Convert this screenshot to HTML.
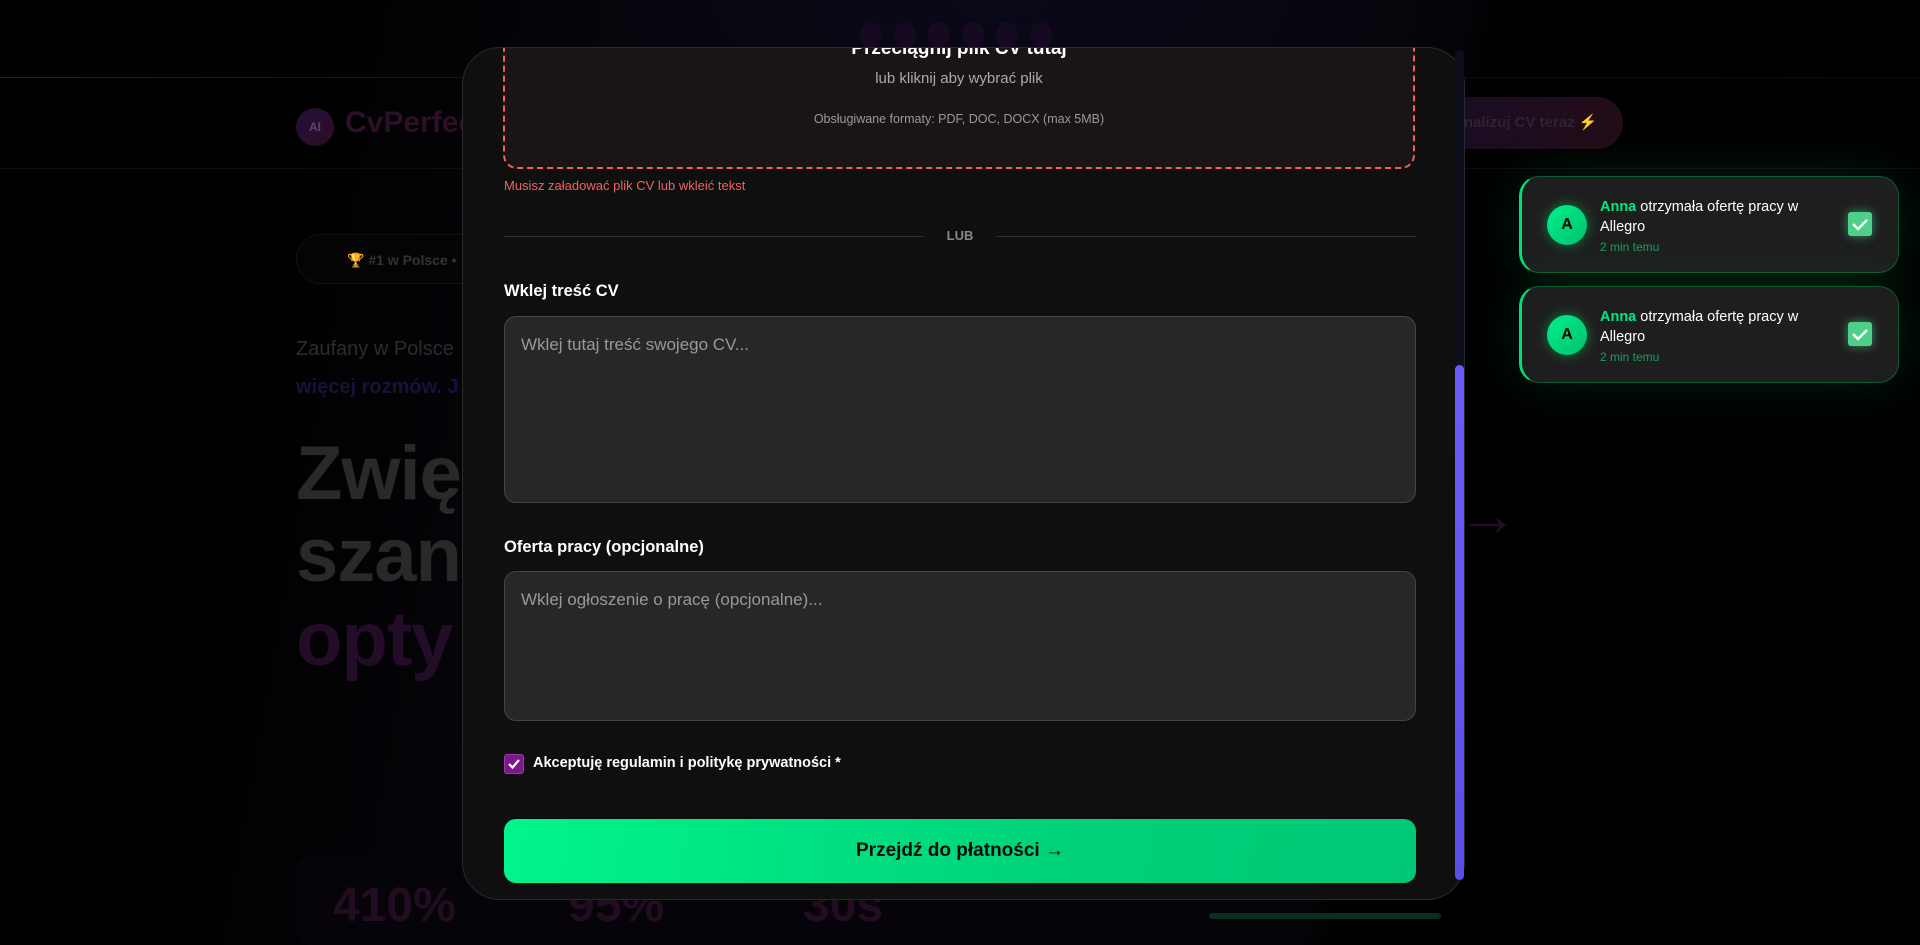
<!DOCTYPE html>
<html><head><meta charset="utf-8"><style>
*{box-sizing:border-box;margin:0;padding:0}
body{width:1920px;height:945px;overflow:hidden;background:#000;font-family:"Liberation Sans",sans-serif;position:relative;color:#fff}
.abs{position:absolute}
.bgglow{left:0;top:0;width:1920px;height:945px;background:radial-gradient(ellipse 700px 300px at 1000px 0px,#0b0919 0%,transparent 70%),linear-gradient(100deg,transparent 14%,#050409 30%,#050409 70%,transparent 72%)}
.hdrline{left:0;top:77px;width:1920px;height:1px;background:linear-gradient(90deg,#0a2e1b,#07140e 40%,#0c0c0c 100%)}
.hdrbot{left:0;top:168px;width:1920px;height:1px;background:#0d0d0d}
.logo{left:296px;top:108px;width:38px;height:38px;border-radius:50%;background:linear-gradient(135deg,#22103a,#2e0c26);color:#5a4a70;font-size:12px;font-weight:bold;text-align:center;line-height:38px}
.brand{left:345px;top:106px;font-size:30px;font-weight:bold;color:#2e1026}
.cta{left:1413px;top:97px;width:210px;height:52px;border-radius:26px;background:linear-gradient(90deg,#170c28,#230c16);color:#302230;font-weight:bold;font-size:15px;line-height:52px;padding-left:40px}
.pill{left:296px;top:234px;width:260px;height:50px;border-radius:25px;border:1px solid #121212;background:#040404;color:#333;font-size:14px;font-weight:bold;line-height:50px;padding-left:50px}
.sub{left:296px;top:330px;font-size:20px;color:#2c2c2c;line-height:38px}
.big{left:296px;font-size:76px;font-weight:bold;color:#292929;letter-spacing:-1px}
.stat{top:878px;font-size:48px;font-weight:bold;color:#220c22}
.dots{top:22px;left:860px;height:26px}
.dots span{display:inline-block;width:22px;height:26px;border-radius:50%;background:#150a22;margin-right:12px}
.modal{left:462px;top:47px;width:1003px;height:853px;border-radius:38px;background:#0f0f0f;border:1px solid #2a2a2a;overflow:hidden}
.drop{left:40px;top:-40px;width:912px;height:161px;border:2px dashed #ef6060;border-radius:14px;background:#1b1414;text-align:center}
.t1{position:absolute;left:0;right:0;top:28px;font-size:19px;font-weight:bold}
.t2{position:absolute;left:0;right:0;top:60px;font-size:15px;color:#aaa}
.t3{position:absolute;left:0;right:0;top:102px;font-size:12.5px;color:#999}
.err{left:41px;top:130px;font-size:13px;color:#f26262}
.lub{left:41px;top:180px;width:912px;height:16px}
.lub .l{position:absolute;top:8px;height:1px;background:#2e2e2e;width:420px}
.lub span{position:absolute;left:0;right:0;text-align:center;font-size:13px;color:#888;font-weight:bold;top:0}
.lbl{left:41px;font-size:16.5px;font-weight:bold}
.ta{left:41px;width:912px;border:1px solid #444;border-radius:12px;background:#272727;color:#999;font-size:17px;padding:18px 16px}
.chk{left:41px;top:706px;width:20px;height:20px;border-radius:3px;background:#7a1a8a;border:1px solid #9a3aaa}
.chkl{left:70px;top:707px;font-size:14.5px;font-weight:bold}
.btn{left:41px;top:771px;width:912px;height:64px;border-radius:12px;background:linear-gradient(100deg,#00f58a,#00d27a 60%,#00c877);color:#0a0a0a;font-weight:bold;font-size:19px;text-align:center;line-height:64px}
.sb{left:1455px;top:365px;width:9px;height:515px;border-radius:5px;background:linear-gradient(#6a5cf8,#5a4ee8)}
.sbt{left:1455px;top:50px;width:9px;height:830px;border-radius:5px;background:#0d0f1c}
.nt{left:1519px;width:380px;height:97px;border-radius:20px;background:#1e1e1e;border:1px solid #0e5a32;border-left:3px solid #00e07a;box-shadow:0 0 50px rgba(0,180,90,.18)}
.av{position:absolute;left:25px;top:28px;width:40px;height:40px;border-radius:50%;background:linear-gradient(135deg,#00f08a,#00c070);color:#000;font-weight:bold;font-size:16px;text-align:center;line-height:40px;box-shadow:0 0 12px rgba(0,220,120,.5)}
.nx{position:absolute;left:78px;top:20px;font-size:14.5px;line-height:20px;width:230px}
.nx b{color:#00e882}
.nx i{font-style:normal;color:#17a060;font-size:12px;display:block}
.ck{position:absolute;right:26px;top:35px;width:24px;height:24px;border-radius:3px;background:#4fd08a;box-shadow:0 0 10px rgba(80,220,140,.6)}
</style></head><body>
<div class="abs bgglow"></div>
<div class="abs dots"><span></span><span></span><span></span><span></span><span></span><span></span></div>
<div class="abs hdrline"></div><div class="abs hdrbot"></div>
<div class="abs logo">AI</div><div class="abs brand">CvPerfect</div>
<div class="abs cta">Analizuj CV teraz ⚡</div>
<div class="abs pill">🏆 #1 w Polsce • </div>
<div class="abs sub">Zaufany w Polsce<br><b style="color:#16133a">więcej rozmów. J</b></div>
<div class="abs big" style="top:430px">Zwię</div>
<div class="abs big" style="top:512px">szan</div>
<div class="abs big" style="top:596px;color:#220c28">opty</div>
<div class="abs" style="left:1458px;top:480px;font-size:60px;color:#240c24;font-weight:bold">→</div>
<div class="abs" style="left:296px;top:855px;width:650px;height:90px;border-radius:14px;background:#060408"></div>
<div class="abs stat" style="left:333px">410%</div>
<div class="abs stat" style="left:568px">95%</div>
<div class="abs stat" style="left:803px">30s</div>
<div class="abs" style="left:1209px;top:913px;width:232px;height:6px;border-radius:3px;background:#083020"></div>
<div class="abs modal">
 <div class="abs drop"><div class="t1">Przeciągnij plik CV tutaj</div><div class="t2">lub kliknij aby wybrać plik</div><div class="t3">Obsługiwane formaty: PDF, DOC, DOCX (max 5MB)</div></div>
 <div class="abs err">Musisz załadować plik CV lub wkleić tekst</div>
 <div class="abs lub"><div class="l" style="left:0"></div><div class="l" style="right:0"></div><span>LUB</span></div>
 <div class="abs lbl" style="top:234px">Wklej treść CV</div>
 <div class="abs ta" style="top:268px;height:187px">Wklej tutaj treść swojego CV...</div>
 <div class="abs lbl" style="top:490px">Oferta pracy (opcjonalne)</div>
 <div class="abs ta" style="top:523px;height:150px">Wklej ogłoszenie o pracę (opcjonalne)...</div>
 <div class="abs chk"><svg width="18" height="18" viewBox="0 0 18 18"><path d="M4 9l3.5 3.5L14 5" stroke="#fff" stroke-width="2.2" fill="none"/></svg></div>
 <div class="abs chkl">Akceptuję regulamin i politykę prywatności *</div>
 <div class="abs btn">Przejdź do płatności →</div>
</div>
<div class="abs sbt"></div><div class="abs sb"></div>
<div class="abs nt" style="top:176px"><div class="av">A</div><div class="nx"><b>Anna</b> otrzymała ofertę pracy w Allegro<i>2 min temu</i></div><div class="ck"><svg width="24" height="24" viewBox="0 0 24 24"><path d="M5 12l5 5 9-9" stroke="#fff" stroke-width="2.4" fill="none"/></svg></div></div>
<div class="abs nt" style="top:286px"><div class="av">A</div><div class="nx"><b>Anna</b> otrzymała ofertę pracy w Allegro<i>2 min temu</i></div><div class="ck"><svg width="24" height="24" viewBox="0 0 24 24"><path d="M5 12l5 5 9-9" stroke="#fff" stroke-width="2.4" fill="none"/></svg></div></div>
</body></html>
